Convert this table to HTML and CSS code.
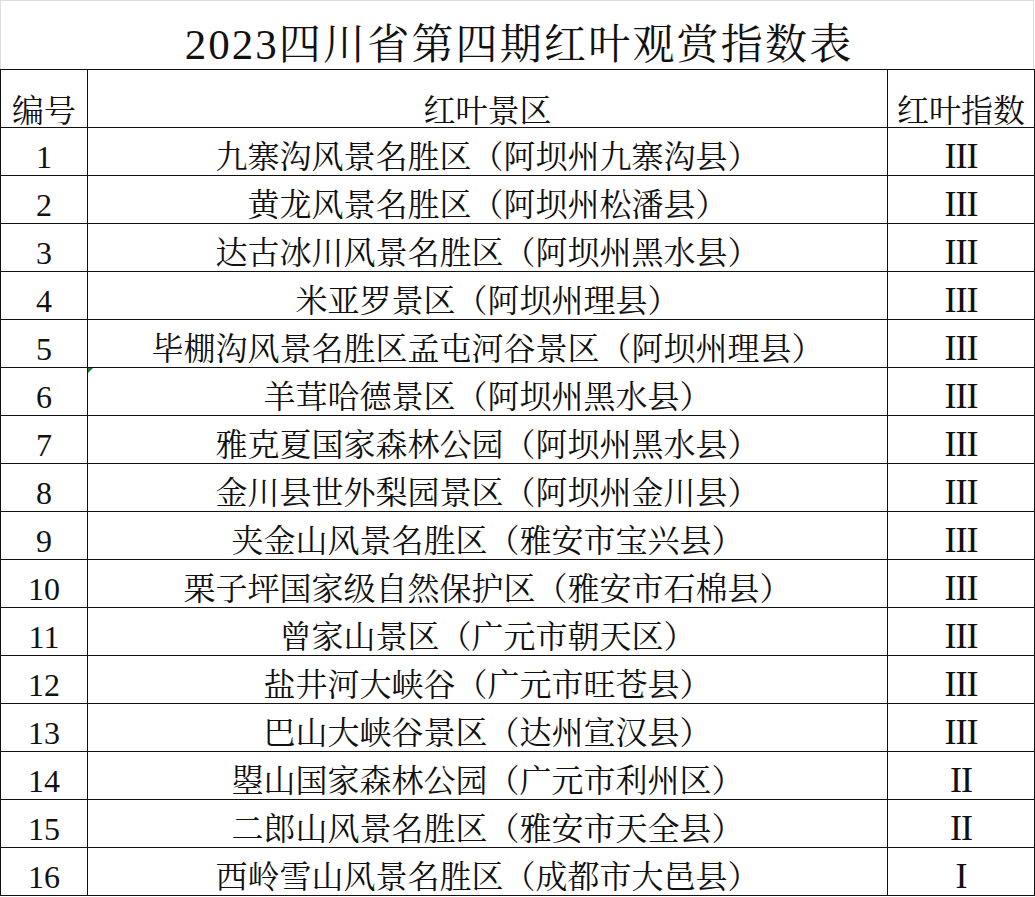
FILE: index.html
```html
<!DOCTYPE html>
<html lang="zh-CN">
<head>
<meta charset="utf-8">
<title>2023四川省第四期红叶观赏指数表</title>
<link rel="stylesheet" href="styles.css">
</head>
<body>
<div class="sheet">
  <div class="title"><span class="year">2023</span><span class="words">四川省第四期红叶观赏指数表</span></div>
  <table class="grid">
    <colgroup>
      <col class="c-no">
      <col class="c-name">
      <col class="c-idx">
    </colgroup>
    <thead>
      <tr class="head">
        <th>编号</th>
        <th>红叶景区</th>
        <th>红叶指数</th>
      </tr>
    </thead>
    <tbody>
      <tr><td>1</td><td>九寨沟风景名胜区（阿坝州九寨沟县）</td><td class="roman">III</td></tr>
      <tr><td>2</td><td>黄龙风景名胜区（阿坝州松潘县）</td><td class="roman">III</td></tr>
      <tr><td>3</td><td>达古冰川风景名胜区（阿坝州黑水县）</td><td class="roman">III</td></tr>
      <tr><td>4</td><td>米亚罗景区（阿坝州理县）</td><td class="roman">III</td></tr>
      <tr><td>5</td><td>毕棚沟风景名胜区孟屯河谷景区（阿坝州理县）</td><td class="roman">III</td></tr>
      <tr><td>6</td><td class="flag">羊茸哈德景区（阿坝州黑水县）</td><td class="roman">III</td></tr>
      <tr><td>7</td><td>雅克夏国家森林公园（阿坝州黑水县）</td><td class="roman">III</td></tr>
      <tr><td>8</td><td>金川县世外梨园景区（阿坝州金川县）</td><td class="roman">III</td></tr>
      <tr><td>9</td><td>夹金山风景名胜区（雅安市宝兴县）</td><td class="roman">III</td></tr>
      <tr><td>10</td><td>栗子坪国家级自然保护区（雅安市石棉县）</td><td class="roman">III</td></tr>
      <tr><td>11</td><td>曾家山景区（广元市朝天区）</td><td class="roman">III</td></tr>
      <tr><td>12</td><td>盐井河大峡谷（广元市旺苍县）</td><td class="roman">III</td></tr>
      <tr><td>13</td><td>巴山大峡谷景区（达州宣汉县）</td><td class="roman">III</td></tr>
      <tr><td>14</td><td>曌山国家森林公园（广元市利州区）</td><td class="roman">II</td></tr>
      <tr><td>15</td><td>二郎山风景名胜区（雅安市天全县）</td><td class="roman">II</td></tr>
      <tr><td>16</td><td>西岭雪山风景名胜区（成都市大邑县）</td><td class="roman">I</td></tr>
    </tbody>
  </table>
</div>
</body>
</html>
```

FILE: styles.css
```css
html, body {
  margin: 0;
  padding: 0;
  background: #ffffff;
}

.sheet {
  width: 1034px;
  font-family: "Liberation Serif", "Noto Serif CJK SC", "Noto Sans CJK SC", serif;
  color: #111111;
}

.title {
  height: 69px;
  box-sizing: border-box;
  border-top: 1px solid #dcdcdc;
  border-left: 1px solid #dcdcdc;
  border-right: 1px solid #dcdcdc;
  display: flex;
  justify-content: center;
  align-items: flex-end;
  font-size: 42px;
  line-height: 48px;
  padding-bottom: 0;
  padding-left: 2px;
}

.title .year {
  font-size: 43px;
  letter-spacing: 2px;
}

.title .words {
  letter-spacing: 2.2px;
  margin-right: -2.2px;
}

.grid {
  width: 1034px;
  border-collapse: collapse;
  table-layout: fixed;
}

.c-no { width: 87px; }
.c-name { width: 800px; }
.c-idx { width: 147px; }

.grid th,
.grid td {
  border: 1px solid #111111;
  padding: 0;
  text-align: center;
  vertical-align: bottom;
  font-size: 32px;
  line-height: 36px;
  font-weight: normal;
  white-space: nowrap;
}

.grid tr.head {
  height: 58px;
}

.grid tbody tr {
  height: 48px;
}

.grid tr.head th {
  line-height: 32px;
}

.grid td.roman {
  font-size: 36px;
  letter-spacing: -1px;
  line-height: 38px;
}

.grid td.flag {
  position: relative;
}

.grid td.flag::before {
  content: "";
  position: absolute;
  left: 0;
  top: 0;
  width: 0;
  height: 0;
  border-top: 5px solid #1e7a2e;
  border-right: 5px solid transparent;
}
```
